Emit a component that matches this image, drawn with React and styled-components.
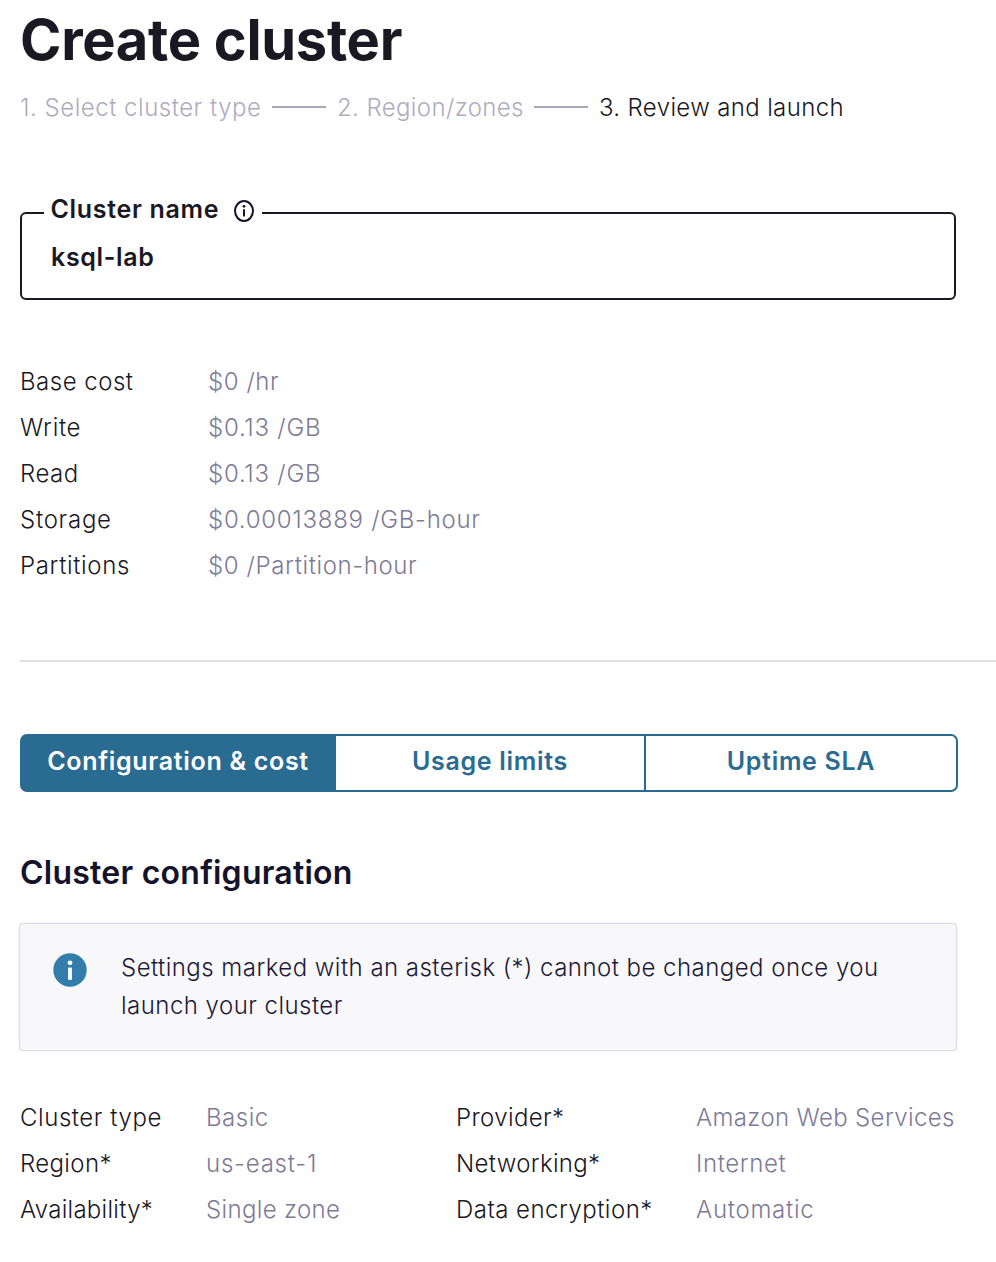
import React from "react";
import styled, { createGlobalStyle } from "styled-components";

const GlobalStyle = createGlobalStyle`
  *, *::before, *::after { box-sizing: border-box; }
  html, body { margin: 0; background: #fff; }
  body {
    font-family: Inter, "Liberation Sans", sans-serif;
    font-size: 24px;
    font-weight: 300;
    letter-spacing: 0.5px;
    color: #1a1823;
    overflow: hidden;
  }
`;

const Page = styled.main`
  width: 996px;
  height: 1262px;
  padding-left: 20px;
  overflow: hidden;
`;

const Title = styled.h1`
  margin: 0;
  height: 88px;
  font-size: 56px;
  line-height: 80px;
  font-weight: 700;
  letter-spacing: -0.3px;
`;

const Steps = styled.ol`
  list-style: none;
  margin: 0;
  padding: 0;
  display: flex;
  align-items: center;
  height: 38px;
  white-space: nowrap;
`;

const Step = styled.li`
  width: ${(p) => p.$width}px;
  letter-spacing: ${(p) => p.$tracking}px;
  color: ${(p) => (p.$current ? "#1a1823" : "#afabbd")};
`;

const StepLine = styled.li`
  width: 54px;
  height: 2px;
  margin: 0 11px;
  background: #aaa6b9;
`;

const Field = styled.div`
  position: relative;
  width: 936px;
  height: 88px;
  margin-top: 86px;
  padding: 24px 29px 0;
  border: 2px solid #1a1823;
  border-radius: 6px;
`;

const FieldLabel = styled.label`
  position: absolute;
  left: 22px;
  top: -24px;
  width: 218px;
  height: 38px;
  padding-left: 6.5px;
  display: flex;
  align-items: center;
  gap: 14px;
  background: #fff;
  font-size: 25px;
  font-weight: 560;
  letter-spacing: 0.68px;
  white-space: nowrap;

  svg { margin-top: 2px; }
`;

const FieldValue = styled.div`
  line-height: 38px;
  font-size: 25px;
  font-weight: 560;
  letter-spacing: 0.65px;
`;

const Prices = styled.dl`
  display: grid;
  grid-template-columns: 188px auto;
  grid-auto-rows: 46px;
  align-items: center;
  margin: 59px 0 0;
`;

const Term = styled.dt`
  line-height: 46px;
  letter-spacing: ${(p) => p.$tracking}px;
  white-space: nowrap;
`;

const Detail = styled.dd`
  margin: 0;
  line-height: 46px;
  letter-spacing: ${(p) => p.$tracking}px;
  white-space: nowrap;
  color: #7e7a96;
`;

const Divider = styled.hr`
  height: 2px;
  margin: 71px 0 72px;
  border: 0;
  background: #e0e0e6;
`;

const Tabs = styled.div`
  display: grid;
  grid-template-columns: 314px 310px 310px;
  width: 938px;
  height: 58px;
  border: 2px solid #2a6b92;
  border-radius: 7px;
  background: linear-gradient(to right, #2a6b92 314px, #fff 314px);
`;

const Tab = styled.button`
  border: 0;
  border-right: ${(p) => (p.$divided ? "2px solid #2a6b92" : "0")};
  padding: 0 ${(p) => (p.$active ? 2 : 0)}px 4px 0;
  font: inherit;
  font-size: 25px;
  font-weight: 560;
  letter-spacing: 0.7px;
  white-space: nowrap;
  color: ${(p) => (p.$active ? "#fff" : "#2a6b92")};
  background: transparent;
`;

const SectionTitle = styled.h2`
  margin: 60px 0 0;
  height: 71px;
  font-size: 32px;
  line-height: 41px;
  font-weight: 600;
  letter-spacing: 0.24px;
  color: #14132b;
`;

const Notice = styled.section`
  display: flex;
  gap: 34px;
  width: 938px;
  height: 128px;
  margin-left: -1px;
  padding: 25px 33px 0;
  border: 1px solid #dcdbe3;
  border-radius: 4px;
  background: #f8f8fa;
  box-shadow: 0 0 2px rgba(20, 19, 43, 0.12);
  color: #1d1a37;

  svg { flex: none; margin-top: 4px; }
  p { margin: 0; line-height: 38px; letter-spacing: 0.465px; white-space: nowrap; }
`;

const Settings = styled.dl`
  display: grid;
  grid-template-columns: 186px 250px 240px auto;
  grid-auto-rows: 46px;
  margin: 44px 0 0;
`;

const prices = [
  { term: "Base cost", detail: "$0 /hr", detailTracking: 0.55 },
  { term: "Write", detail: "$0.13 /GB", termTracking: 0.7, detailTracking: 0.75 },
  { term: "Read", detail: "$0.13 /GB", detailTracking: 0.75 },
  { term: "Storage", detail: "$0.00013889 /GB-hour", termTracking: 0.75, detailTracking: 0.72 },
  { term: "Partitions", detail: "$0 /Partition-hour", termTracking: 0.65, detailTracking: 0.62 },
];

const settings = [
  { term: "Cluster type", detail: "Basic", termTracking: 0.56 },
  { term: "Provider*", detail: "Amazon Web Services", termTracking: 0.38, detailTracking: 0.36 },
  { term: "Region*", detail: "us-east-1", termTracking: 0.36, detailTracking: 0.78 },
  { term: "Networking*", detail: "Internet", termTracking: 0.32, detailTracking: 0.62 },
  { term: "Availability*", detail: "Single zone", termTracking: 0.27, detailTracking: 0.34 },
  { term: "Data encryption*", detail: "Automatic", termTracking: 0.48, detailTracking: 0.74 },
];

const InfoOutline = () => (
  <svg width="22" height="26" viewBox="0 0 22 26" fill="none">
    <ellipse cx="11" cy="14" rx="9" ry="9.9" stroke="#14132b" strokeWidth="2" />
    <circle cx="11" cy="9.3" r="1.4" fill="#14132b" />
    <path d="M11 12.2V19.6" stroke="#14132b" strokeWidth="2" />
  </svg>
);

const InfoSolid = () => (
  <svg width="34" height="34" viewBox="0 0 34 34">
    <circle cx="17" cy="17" r="16.7" fill="#337dab" />
    <circle cx="17" cy="9.8" r="2.4" fill="#fff" />
    <path d="M17 14.6V26.8" stroke="#fff" strokeWidth="3.8" />
  </svg>
);

const Pairs = ({ items }) =>
  items.map(({ term, detail, termTracking = 0.5, detailTracking = 0.5 }) => (
    <React.Fragment key={term}>
      <Term $tracking={termTracking}>{term}</Term>
      <Detail $tracking={detailTracking}>{detail}</Detail>
    </React.Fragment>
  ));

export default function App() {
  return (
    <Page>
      <GlobalStyle />
      <Title>Create cluster</Title>
      <Steps>
        <Step $width={241} $tracking={0.52}>1. Select cluster type</Step>
        <StepLine />
        <Step $width={186} $tracking={0.38}>2. Region/zones</Step>
        <StepLine />
        <Step $width={250} $tracking={0.36} $current>3. Review and launch</Step>
      </Steps>
      <Field>
        <FieldLabel>
          Cluster name
          <InfoOutline />
        </FieldLabel>
        <FieldValue>ksql-lab</FieldValue>
      </Field>
      <Prices>
        <Pairs items={prices} />
      </Prices>
      <Divider />
      <Tabs>
        <Tab $active>Configuration &amp; cost</Tab>
        <Tab $divided>Usage limits</Tab>
        <Tab>Uptime SLA</Tab>
      </Tabs>
      <SectionTitle>Cluster configuration</SectionTitle>
      <Notice>
        <InfoSolid />
        <p>
          Settings marked with an asterisk (*) cannot be changed once you
          <br />
          launch your cluster
        </p>
      </Notice>
      <Settings>
        <Pairs items={settings} />
      </Settings>
    </Page>
  );
}
